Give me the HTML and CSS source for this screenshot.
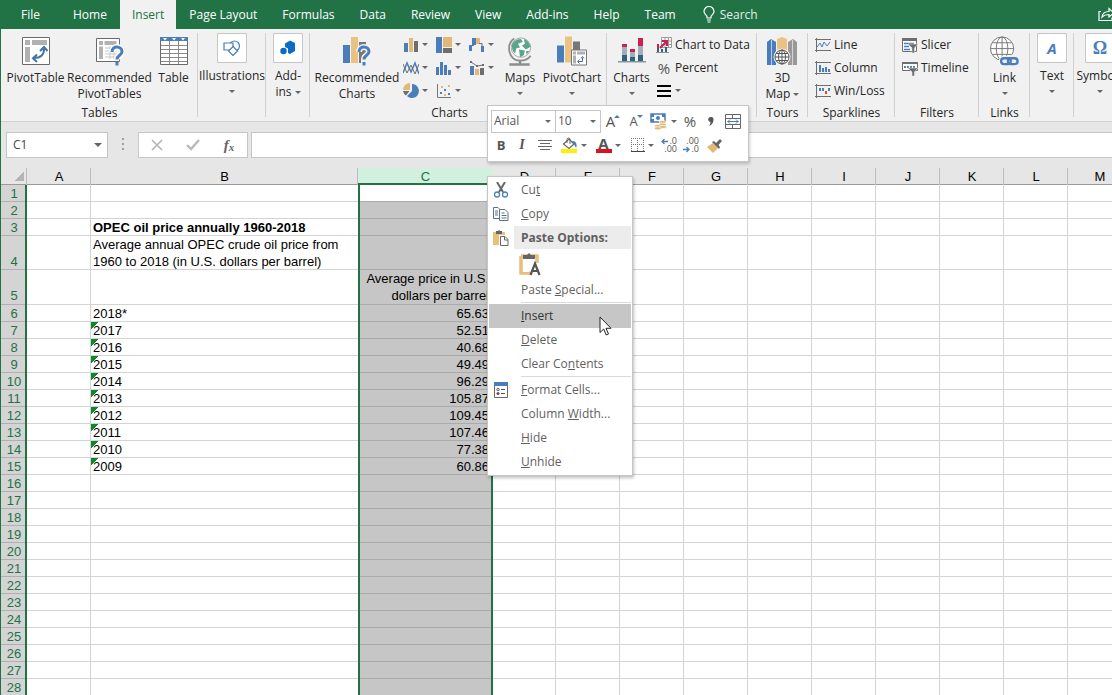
FILE: index.html
```html
<!DOCTYPE html>
<html lang="en">
<head>
  <meta charset="UTF-8"/>
  <meta name="viewport" content="width=device-width, initial-scale=1.0"/>
  <title>OPEC oil price - Excel</title>
  <link rel="stylesheet" href="styles.css">
</head>
<body>
  <nav class="tabs">
    <button class="tab tab-file">File</button>
    <button class="tab">Home</button>
    <button class="tab active">Insert</button>
    <button class="tab">Page Layout</button>
    <button class="tab">Formulas</button>
    <button class="tab">Data</button>
    <button class="tab">Review</button>
    <button class="tab">View</button>
    <button class="tab">Add-ins</button>
    <button class="tab">Help</button>
    <button class="tab">Team</button>
    <button class="tab tab-search">
      <svg width="12" height="17" viewBox="0 0 12 17" fill="none" stroke="#fff" stroke-width="1.2"><path d="M4 12V10.500C3.500 9 1 8 1 5.500A5 5 0 0 1 11 5.500C11 8 8.500 9 8 10.500V12zM4 14h4M4.500 16h3"/></svg>
      Search
    </button>
    <button class="share" aria-label="Share">
      <svg width="18" height="14" viewBox="0 0 18 14" fill="none" stroke="#fff" stroke-width="1.2"><path d="M3 4.500H1v9h13v-3M4 10c.5-4 3-5.500 7-5.500V1.500l5 4.500-5 4V7.500c-3 0-5 .5-7 2.500z"/></svg>
    </button>
  </nav>

  <section class="ribbon">
    <div class="group g-tables">
      <div class="group-body">
        <button class="big b-pivot">
          <svg class="icon" width="28" height="28" viewBox="0 0 28 28"><path fill="#fff" stroke="#6a6a6a" d="M.5.5h27v27H.5z"/><path fill="#b1b1b1" d="M3 3h5v5H3zM10 3h15v5H10zM3 10h5v15H3z"/><path d="M12 21c7 0 10-3 10-9M15 17.500l-4 3.800 4 3.700M18 14l4-4 3.500 4" fill="none" stroke="#4472a8" stroke-width="2"/></svg>
          <span>PivotTable</span>
        </button>
        <button class="big b-recpivot">
          <svg class="icon" width="28" height="30" viewBox="0 0 28 30"><path fill="#fff" stroke="#6a6a6a" d="M.5 2.500h23v23H.5z"/><path fill="#b1b1b1" d="M3 5h4v4H3zM8.500 5h12v4h-12zM3 10.500h4V23H3z"/><path d="M9 12h12M9 15h12M9 18h12M9 21h12M14 10v13M18 10v13" stroke="#c6c6c6"/><path d="M16 16c0-7 10-6 10-.5 0 4-5 3.500-5 8" fill="none" stroke="#fff" stroke-width="6"/><path d="M16 16c0-7 10-6 10-.5 0 4-5 3.500-5 8" fill="none" stroke="#4a7ebb" stroke-width="3"/><path d="M19.500 26h3v3.500h-3z" fill="#4a7ebb"/></svg>
          <span>Recommended<br>PivotTables</span>
        </button>
        <button class="big b-table">
          <svg class="icon" width="28" height="28" viewBox="0 0 28 28"><path fill="#fff" stroke="#6a6a6a" d="M.5.5h27v27H.5z"/><path fill="#4a7ebb" d="M0 0h28v4H0z"/><path d="M3 1h4L5 3.500zM12 1h4l-2 2.500zM21 1h4l-2 2.500z" fill="#fff"/><path d="M1 8.500h26M1 12.500h26M1 16.500h26M1 20.500h26M1 24.500h26M9.500 4v23M18.500 4v23" stroke="#8a8a8a"/></svg>
          <span>Table</span>
        </button>
      </div>
      <div class="group-label">Tables</div>
    </div>

    <div class="group g-illus">
      <div class="group-body">
        <button class="big">
          <span class="box"><svg width="18" height="16" viewBox="0 0 18 16" fill="#fff" stroke="#4a7ebb" stroke-width="1.200"><circle cx="11.500" cy="6" r="5"/><path d="M1 3h9v7H1z"/><path d="M10 6.500l4.500 4.500-4.500 4.500L5.500 11z"/></svg></span>
          <span>Illustrations</span><i class="arrow"></i>
        </button>
      </div>
    </div>

    <div class="group g-addins">
      <div class="group-body">
        <button class="big">
          <span class="box"><svg width="16" height="16" viewBox="0 0 16 16" fill="#0a6cc4"><path d="M5 3.500L10 .5l5 2.500v8l-5 3-2-1V8.500L5 7z"/><circle cx="3.500" cy="11" r="3.200"/></svg></span>
          <span>Add-<br>ins <i class="arrow"></i></span>
        </button>
      </div>
    </div>

    <div class="group g-charts">
      <div class="group-body">
        <button class="big b-reccharts">
          <svg class="icon" width="28" height="30" viewBox="0 0 28 30"><path fill="#4a7ebb" d="M0 9h7v18H0z"/><path fill="#eac282" d="M8 1h7v26H8z"/><path fill="#777" d="M16 6h7v21h-7z"/><path d="M16 16c0-7 10-6 10-.5 0 4-5 3.500-5 8v6" fill="none" stroke="#f1f1f1" stroke-width="6"/><path d="M16 16c0-7 10-6 10-.5 0 4-5 3.500-5 8" fill="none" stroke="#4a7ebb" stroke-width="3"/><path d="M19.500 26h3v3.500h-3z" fill="#4a7ebb"/></svg>
          <span>Recommended<br>Charts</span>
        </button>
        <div class="minis">
          <button aria-label="Column chart"><svg width="16" height="16" viewBox="0 0 16 16"><path fill="#4a7ebb" d="M1 6h4v9H1z"/><path fill="#e3b876" d="M6 1h4v14H6z"/><path fill="#6e6e6e" d="M11 4h4v11h-4z"/></svg><i class="arrow"></i></button>
          <button aria-label="Hierarchy chart"><svg width="16" height="16" viewBox="0 0 16 16"><path fill="#4a7ebb" d="M0 0h6v16H0z"/><path fill="#e3b876" d="M7 0h9v10H7z"/><path fill="#6e6e6e" d="M7 11h9v5H7z"/></svg><i class="arrow"></i></button>
          <button aria-label="Waterfall chart"><svg width="16" height="16" viewBox="0 0 16 16"><path fill="#4a7ebb" d="M0 8h3v6H0zM3 1h4v7H3zM12 9h3v6h-3z"/><path fill="#e3b876" d="M7 1h4v6H7z"/><path d="M3 8.500h2M10 6.500h3v3" stroke="#6e6e6e" fill="none"/></svg><i class="arrow"></i></button>
          <button aria-label="Line chart"><svg width="16" height="16" viewBox="0 0 16 16" fill="none"><path d="M0 13L4 3l4 9 4-9 4 11" stroke="#4a7ebb" stroke-width="1.500"/><path d="M0 4l4 9 4-8 4 9 4-10" stroke="#6e6e6e"/></svg><i class="arrow"></i></button>
          <button aria-label="Statistic chart"><svg width="16" height="16" viewBox="0 0 16 16" fill="#4a7ebb"><path d="M0 7h3v8H0zM4 2h3v13H4zM8 5h3v10H8zM12 10h3v5h-3z"/></svg><i class="arrow"></i></button>
          <button aria-label="Combo chart"><svg width="16" height="16" viewBox="0 0 16 16"><path fill="#4a7ebb" d="M1 6h4v9H1z"/><path fill="#e3b876" d="M6 9h4v6H6z"/><path fill="#6e6e6e" d="M11 8h4v7h-4z"/><path d="M2 2l6 4 6-1" stroke="#6e6e6e" fill="none"/><path d="M1 1h2v2H1zM7 5h2v2H7zM13 4h2v2h-2z" fill="#6e6e6e"/></svg><i class="arrow"></i></button>
          <button aria-label="Pie chart"><svg width="16" height="16" viewBox="0 0 16 16"><path fill="#4a7ebb" d="M9 1a7 7 0 1 1-5 12l5-5z"/><path fill="#e3b876" d="M7 0v7H0a7 7 0 0 1 7-7z"/><path fill="#6e6e6e" d="M0 8h6.500L3 12.500A7 7 0 0 1 0 8z"/></svg><i class="arrow"></i></button>
          <button aria-label="Scatter chart"><svg width="16" height="16" viewBox="0 0 16 16"><path d="M1.500 1v13.500H15" stroke="#777" fill="none"/><path fill="#4a7ebb" d="M4 9h2v2H4zM8 6h2v2H8zM12 10h2v2h-2z"/><path fill="#e3b876" d="M5 3h2v2H5zM12 2h2v2h-2zM8 11h2v2H8z"/></svg><i class="arrow"></i></button>
        </div>
        <button class="big b-maps">
          <svg class="icon" width="26" height="31" viewBox="0 0 26 31"><path d="M7 2.500C-2 9 1 25 13 25.500c5 0 9-2 11-5" fill="none" stroke="#8c8c8c" stroke-width="1.800"/><circle cx="14" cy="12" r="10" fill="#fff" stroke="#a5a5a5"/><path fill="#5ba58a" d="M5 8c2-3 5-5 9-5l2 3-5 2 2 4-4 1-1 5c-3-2-4-6-3-10zM17 3c4 1 6 5 7 8l-5 3-4-4 3-2zM12 14l6 1-1 5-4 2zM19 16l4-1-3 4z"/><path d="M13 25v4M2 29.500h21" stroke="#8c8c8c" stroke-width="2.500"/></svg>
          <span>Maps</span><i class="arrow"></i>
        </button>
        <button class="big b-pchart">
          <svg class="icon" width="30" height="29" viewBox="0 0 30 29"><path fill="#4a7ebb" d="M0 9h7v17H0z"/><path fill="#eac282" d="M8 0h7v26H8z"/><path fill="#777" d="M16 5h7v10h-7z"/><path fill="#fff" stroke="#777" d="M14.500 13.500h15v15h-15z"/><path fill="#b1b1b1" d="M16 15h3v3h-3zM20 15h8v3h-8zM16 19h3v8h-3z"/><path d="M21 25h4.500v-4M22.500 23l-2 2 2 2M24 22l1.500-2 1.500 2" fill="none" stroke="#4472a8"/></svg>
          <span>PivotChart</span><i class="arrow"></i>
        </button>
      </div>
      <div class="group-label">Charts</div>
    </div>

    <div class="group g-addcharts">
      <div class="group-body">
        <button class="big b-charts">
          <svg class="icon" width="28" height="26" viewBox="0 0 28 26"><path fill="#a3aebb" d="M4 8h5v10H4zM12 14h5v5h-5zM20 7h5v11h-5z"/><path fill="#c8234f" d="M4 6h5v3H4zM12 11h5v3h-5zM20 0h5v8h-5z"/><path fill="#2d6478" d="M4 17h5v6H4zM12 19h5v4h-5zM20 17h5v6h-5z"/><path fill="#8795a1" d="M0 23h28v1.500H0z"/></svg>
          <span>Charts</span><i class="arrow"></i>
        </button>
        <div class="list">
          <button><svg width="16" height="16" viewBox="0 0 16 16"><path fill="#fff" stroke="#999" d="M5.500.5h10v10h-10zM5.500 4h10M5.500 7.500h10M9 .5v10M12.500.5v10"/><path fill="#2d6478" d="M1 11h2v4H1zM5 12h2v3H5zM9 10h2v5H9z"/><path fill="#c8234f" d="M1 7h2v4H1z"/><path d="M4 11l6-6M6 4h5v5" stroke="#c8234f" stroke-width="2" fill="none"/><path d="M0 15.500h13" stroke="#8795a1"/></svg>Chart to Data</button>
          <button><b class="pct">%</b>Percent</button>
          <button aria-label="Lines"><svg width="16" height="16" viewBox="0 0 16 16"><path fill="#000" d="M1 2h14v2H1zM1 7h14v2H1zM1 12h14v2H1z"/></svg><i class="arrow"></i></button>
        </div>
      </div>
    </div>

    <div class="group g-tours">
      <div class="group-body">
        <button class="big">
          <svg class="icon" width="30" height="28" viewBox="0 0 30 28"><path fill="#4a7ebb" d="M0 5l4-3 5 3v23H0z"/><path fill="#eac282" d="M10 2l5-2 5 2v14H10z"/><path fill="#999" d="M21 5l5-3 4 3v23h-9z"/><path d="M4.500 3v25M25.500 3v25" stroke="#f1f1f1" stroke-width=".7"/><circle cx="15" cy="20" r="8" fill="#fff" stroke="#f1f1f1"/><g fill="none" stroke="#555"><circle cx="15" cy="20" r="7"/><ellipse cx="15" cy="20" rx="3.500" ry="7"/><path d="M8 20h14M9 16.500h12M9 23.500h12M15 13v14"/></g></svg>
          <span>3D<br>Map <i class="arrow"></i></span>
        </button>
      </div>
      <div class="group-label">Tours</div>
    </div>

    <div class="group g-spark">
      <div class="group-body">
        <div class="list">
          <button><svg width="16" height="14" viewBox="0 0 16 14" fill="none"><path d="M0 1.500h16M0 12.500h16M1.500 0v14" stroke="#6e6e6e"/><path d="M2 9l3-4 2 4 2-5 3 4 3-4" stroke="#4a7ebb"/></svg>Line</button>
          <button><svg width="16" height="14" viewBox="0 0 16 14"><path d="M0 1.500h16M0 12.500h16M1.500 0v14" stroke="#6e6e6e"/><path fill="#4a7ebb" d="M4 4h2v7H4zM7 7h2v4H7zM10 6h2v5h-2zM13 8h2v3h-2z"/></svg>Column</button>
          <button><svg width="16" height="14" viewBox="0 0 16 14"><path d="M0 1.500h16M0 12.500h16M1.500 0v14" stroke="#6e6e6e"/><path fill="#4a7ebb" d="M4 4h2v3H4zM7 4h2v3H7zM13 4h2v3h-2z"/><path fill="#d0532c" d="M10 7h2v3h-2z"/></svg>Win/Loss</button>
        </div>
      </div>
      <div class="group-label">Sparklines</div>
    </div>

    <div class="group g-filters">
      <div class="group-body">
        <div class="list">
          <button><svg width="16" height="16" viewBox="0 0 16 16"><path fill="#fff" stroke="#6e6e6e" d="M.5 1.500h14v13H.5z"/><path fill="#6e6e6e" d="M0 1h15v3H0z"/><path d="M2 6.500h10M2 9.500h5M2 12.500h6" stroke="#4a7ebb" stroke-width="1.500"/><path d="M6 7h10l-3.500 4v5H10v-5z" fill="#6e6e6e" stroke="#f1f1f1" stroke-width=".5"/></svg>Slicer</button>
          <button><svg width="16" height="16" viewBox="0 0 16 16"><path fill="#fff" stroke="#6e6e6e" d="M.5 2.500h15v8H.5z"/><path fill="#6e6e6e" d="M0 2h16v2H0z"/><path d="M2 7h11" stroke="#4a7ebb" stroke-width="2" stroke-dasharray="2 1"/><path d="M6 8h10l-3.500 4v4H10v-4z" fill="#6e6e6e" stroke="#f1f1f1" stroke-width=".5"/></svg>Timeline</button>
        </div>
      </div>
      <div class="group-label">Filters</div>
    </div>

    <div class="group g-links">
      <div class="group-body">
        <button class="big">
          <svg class="icon" width="31" height="31" viewBox="0 0 31 31" fill="none"><g stroke="#777"><circle cx="13" cy="13" r="12" fill="#fff"/><ellipse cx="13" cy="13" rx="6" ry="12"/><path d="M1 13h24M3 7h20M3 19h20M13 1v24"/></g><g stroke="#f1f1f1" stroke-width="5"><rect x="12" y="23" width="10" height="6" rx="3"/><rect x="20" y="22" width="10" height="6" rx="3"/></g><g stroke="#4a7ebb" stroke-width="2.400"><rect x="12" y="23" width="10" height="6" rx="3"/><rect x="19" y="23" width="10" height="6" rx="3"/></g></svg>
          <span>Link</span><i class="arrow"></i>
        </button>
      </div>
      <div class="group-label">Links</div>
    </div>

    <div class="group g-text">
      <div class="group-body">
        <button class="big"><span class="box letter"><em>A</em></span><span>Text</span><i class="arrow"></i></button>
      </div>
    </div>

    <div class="group g-symbols">
      <div class="group-body">
        <button class="big"><span class="box letter omega">Ω</span><span>Symbols</span><i class="arrow"></i></button>
      </div>
    </div>
  </section>

  <section class="formula-bar">
    <div class="name-box">
      <input type="text" value="C1" aria-label="Name box"/>
      <i class="arrow"></i>
    </div>
    <span class="dots"></span>
    <div class="fx-box">
      <button aria-label="Cancel"><svg width="12" height="12" viewBox="0 0 12 12"><path d="M1 1l10 10M11 1L1 11" stroke="#b5b5b5" stroke-width="1.600"/></svg></button>
      <button aria-label="Enter"><svg width="14" height="12" viewBox="0 0 14 12"><path d="M1 6l4 4 8-9" stroke="#b9b9b9" stroke-width="2.400" fill="none"/></svg></button>
      <button class="fx" aria-label="Insert function">f<small>x</small></button>
    </div>
    <input class="formula" type="text" aria-label="Formula bar"/>
  </section>

  <main class="sheet">
    <table>
      <thead><tr id="cols"></tr></thead>
      <tbody id="rows"></tbody>
    </table>
  </main>

  <div class="mini-toolbar">
    <div class="bar-row">
      <label class="pick pick-font"><select aria-label="Font"><option>Arial</option></select><i class="arrow"></i></label>
      <label class="pick pick-size"><select aria-label="Font size"><option>10</option></select><i class="arrow"></i></label>
      <button class="t26" aria-label="Increase font size"><span class="grow">A</span><svg class="tip" width="6" height="3" viewBox="0 0 6 3"><path d="M0 3l3-3 3 3z" fill="#4a7ebb"/></svg></button>
      <button class="t20" aria-label="Decrease font size"><span class="shrink">A</span><svg class="tip" width="6" height="3" viewBox="0 0 6 3"><path d="M0 0l3 3 3-3z" fill="#4a7ebb"/></svg></button>
      <button class="t34" aria-label="Accounting format"><svg width="18" height="17" viewBox="0 0 18 17"><path fill="#fff" stroke="#4a7ebb" stroke-width="1.500" d="M1 1h14v8H1z"/><path fill="#4a7ebb" d="M1 1h3v3H1zM12 1h3v3h-3zM1 6h3v3H1z"/><circle cx="8" cy="5" r="2" fill="#4a7ebb"/><g fill="#e3b876" stroke="#fff" stroke-width=".6"><ellipse cx="12.500" cy="9" rx="3.500" ry="1.500"/><ellipse cx="12.500" cy="11.500" rx="3.500" ry="1.500"/><ellipse cx="8" cy="13" rx="3.500" ry="1.500"/><ellipse cx="8" cy="15.300" rx="3.500" ry="1.500"/><ellipse cx="13" cy="14" rx="3.500" ry="1.500"/></g></svg><i class="arrow"></i></button>
      <button class="t20 percent" aria-label="Percent style">%</button>
      <button class="t22" aria-label="Comma style"><svg width="6" height="9" viewBox="0 0 6 9" fill="#555"><path d="M3 0a2.400 2.400 0 0 1 2.500 2.500C5.500 5.500 4 8 1 9c1-1.500 1.500-2.500 1.500-4A2.400 2.400 0 0 1 3 0z"/></svg></button>
      <button class="t22" aria-label="Merge and center"><svg width="16" height="15" viewBox="0 0 16 15" fill="none"><path stroke="#666" d="M.5.5h15v14H.5zM.5 4.500h15M.5 10.500h15M7.500.5v4M7.500 10.500v4"/><path stroke="#4a7ebb" d="M2.500 7.500h11M5 5.500l-2 2 2 2M11 5.500l2 2-2 2"/></svg></button>
    </div>
    <div class="bar-row">
      <button class="t20"><b>B</b></button>
      <button class="t22 italic"><b>I</b></button>
      <button class="t24" aria-label="Center"><svg width="14" height="11" viewBox="0 0 14 11"><path d="M0 .5h14M2 3.500h10M0 6.500h14M2 9.500h10" stroke="#666"/></svg></button>
      <button class="t34" aria-label="Fill color"><svg width="17" height="16" viewBox="0 0 17 16"><path d="M8 2l5 5-5 4.500L2.500 7z" fill="#fff" stroke="#666" stroke-width="1.200"/><path d="M6 6V2.500a1.500 1.500 0 0 1 3 0V7" fill="none" stroke="#666"/><path d="M11 4c4-.5 5 3 4.500 6.500C14 10 13.500 8 13 7z" fill="#4a7ebb"/><path fill="#ffef00" d="M0 12h16v4H0z"/></svg><i class="arrow"></i></button>
      <button class="t34" aria-label="Font color"><span class="font-color">A</span><i class="arrow"></i></button>
      <button class="t34" aria-label="Borders"><svg width="14" height="14" viewBox="0 0 14 14"><path d="M.5 0v13M6.500 0v13M12.500 0v13M0 .5h13M0 6.500h13" stroke="#777" stroke-dasharray="1 1"/><path d="M0 13.500h14" stroke="#444"/></svg><i class="arrow"></i></button>
      <button class="t22 dec" aria-label="Increase decimal"><span><svg width="7" height="7" viewBox="0 0 7 7"><path d="M7 3.500H1M3.500 1L1 3.500 3.500 6" stroke="#4a7ebb" stroke-width="1.300" fill="none"/></svg>.0</span><span>.00</span></button>
      <button class="t22 dec" aria-label="Decrease decimal"><span>.00</span><span><svg width="7" height="7" viewBox="0 0 7 7"><path d="M0 3.500h6M3.500 1L6 3.500 3.500 6" stroke="#4a7ebb" stroke-width="1.300" fill="none"/></svg>.0</span></button>
      <button class="t24" aria-label="Format painter"><svg width="16" height="15" viewBox="0 0 16 15"><path fill="#e3b876" d="M0 9l6-4 5 5-5 5z"/><path fill="#666" d="M5 4l2-1 2 2 4-4 2 2-3.500 4L13 9l-1 2z"/></svg></button>
    </div>
  </div>

  <div class="menu">
    <button><span class="slot"><svg width="14" height="16" viewBox="0 0 14 16" fill="none"><path d="M3 0l6 10M11 0L5 10" stroke="#666" stroke-width="2"/><circle cx="3" cy="12.500" r="2.500" stroke="#4a7ebb" stroke-width="1.300"/><circle cx="11" cy="12.500" r="2.500" stroke="#4a7ebb" stroke-width="1.300"/></svg></span><span>Cu<u>t</u></span></button>
    <button><span class="slot"><svg width="16" height="14" viewBox="0 0 16 14" fill="#fff" stroke="#5b6f8e"><path d="M.5.5H5l3 3v8H.5z"/><path d="M2 4h3M2 6h3M2 8h3"/><path d="M6.500 2.500H12l3 3v8H6.500z"/><path d="M8.500 6h3M8.500 8.500h5M8.500 11h5"/></svg></span><span><u>C</u>opy</span></button>
    <div class="menu-head"><span class="slot"><svg width="16" height="16" viewBox="0 0 16 16"><path fill="#e9bf7a" d="M0 2h12v13H0z"/><path fill="#666" d="M3 1h2l1-1 1 1h2v3H3z"/><path fill="#fff" stroke="#fff" stroke-width="3" d="M7.500 6.500H12l3 3v6H7.500z"/><path fill="#fff" stroke="#666" d="M7.500 6.500H12l3 3v6H7.500z"/><path fill="none" stroke="#666" d="M11.500 6.500v3.500H15"/></svg></span><strong>Paste Options:</strong></div>
    <button class="paste" aria-label="Keep text only"><svg width="22" height="24" viewBox="0 0 22 24"><path d="M2 4h16v7M2 4v17h9" fill="none" stroke="#e9bf7a" stroke-width="3.500"/><path fill="#fff" d="M4 6h12v6l-6 8H4z"/><path fill="#666" d="M4 3h4l2-2 2 2h4v4H4z"/><path d="M11.500 23l4.500-11.500L20.500 23M13 19h6" fill="none" stroke="#555" stroke-width="2.200"/></svg></button>
    <button><span class="slot"></span><span>Paste <u>S</u>pecial...</span></button>
    <hr>
    <button class="hover"><span class="slot"></span><span><u>I</u>nsert</span></button>
    <button><span class="slot"></span><span><u>D</u>elete</span></button>
    <button><span class="slot"></span><span>Clear Co<u>n</u>tents</span></button>
    <hr>
    <button><span class="slot"><svg width="14" height="16" viewBox="0 0 14 16" fill="#fff"><path d="M.5.5h13v15H.5z" stroke="#666"/><path d="M0 0h14v4H0z" fill="#4a7ebb"/><circle cx="4" cy="7.500" r="1.200" stroke="#555"/><path d="M7 7.500h4M7 11.500h4" stroke="#555"/><circle cx="4" cy="11.500" r="1.500" fill="#555"/></svg></span><span><u>F</u>ormat Cells...</span></button>
    <button><span class="slot"></span><span>Column <u>W</u>idth...</span></button>
    <button><span class="slot"></span><span><u>H</u>ide</span></button>
    <button><span class="slot"></span><span><u>U</u>nhide</span></button>
    <svg class="cursor" width="13" height="20" viewBox="0 0 13 20"><path d="M1 1v15.500l3.700-3.500 2.500 6 2.300-1-2.500-5.700H12z" fill="#fff" stroke="#222"/></svg>
  </div>

  <script>
    const letters = "ABCDEFGHIJKLM".split("");
    const cells = {
      B3: "OPEC oil price annually 1960-2018",
      B4: "Average annual OPEC crude oil price from 1960 to 2018 (in U.S. dollars per barrel)",
      C5: "Average price in U.S. dollars per barrel",
      B6: "2018*", C6: "65.63"
    };
    const prices = ["52.51", "40.68", "49.49", "96.29", "105.87", "109.45", "107.46", "77.38", "60.86"];
    prices.forEach((price, i) => {
      cells["B" + (7 + i)] = String(2017 - i);
      cells["C" + (7 + i)] = price;
    });

    let head = '<th class="corner"></th>';
    letters.forEach(l => { head += `<th class="col-${l}">${l}</th>`; });
    document.getElementById("cols").innerHTML = head;

    let body = "";
    for (let r = 1; r <= 28; r++) {
      body += `<tr class="row-${r}"><th>${r}</th>`;
      letters.forEach(l => {
        const flag = l === "B" && r > 6 && r < 16 ? " flag" : "";
        body += `<td class="col-${l}${flag}">${cells[l + r] || ""}</td>`;
      });
      body += "</tr>";
    }
    document.getElementById("rows").innerHTML = body;
  </script>
</body>
</html>
```

FILE: styles.css
```css
:root {
  --green: #217346;
  --ribbon: #f1f1f1;
  --line: #d4d4d4;
  --text: #262626;
  --gray: #5f5f5f;
}
* { margin:0; padding:0; box-sizing:border-box; }
html, body { height:100%; }
body {
  display:flex; flex-direction:column; overflow:hidden; position:relative;
  font-family:'Open Sans','Noto Sans',sans-serif; font-size:12px; line-height:16px;
  color:var(--text); background:#fff; border-left:1px solid var(--green);
}
button, input, select { font:inherit; color:inherit; background:none; border:none; border-radius:0; outline:none; }
button { white-space:nowrap; }
svg { display:block; flex:none; }

.arrow {
  display:inline-block; width:0; height:0; vertical-align:middle; flex:none;
  border-left:3px solid transparent; border-right:3px solid transparent; border-top:3px solid #666;
}

/* tabs */
.tabs { display:flex; gap:1px; height:29px; flex:none; background:var(--green); color:#fff; overflow:hidden; }
.tab { padding:0 12px; flex:none; }
.tab-file { padding:0 20px; }
.tab.active { background:var(--ribbon); color:var(--green); }
.tab-search { display:flex; align-items:center; gap:5px; padding:0 14px; color:#e3efe8; }
.share { position:absolute; right:-4px; top:7px; }

/* ribbon */
.ribbon {
  display:flex; flex:none; height:93px; padding-top:4px; overflow:hidden;
  background:var(--ribbon); border-bottom:1px solid #d2d2d2;
}
.group {
  display:flex; flex-direction:column; flex:none;
  background:linear-gradient(#d0d0d0,#d0d0d0) right top / 1px 84px no-repeat;
}
.group-body { display:flex; height:73px; justify-content:center; }
.group-label { text-align:center; }
.big { display:flex; flex-direction:column; align-items:center; }
.big .icon { height:37px; padding:3px 0 4px; }
.big > .arrow { margin-top:6px; }
.box {
  width:30px; height:30px; margin-bottom:5px; background:#fff; border:1px solid #c6c6c6;
  display:flex; align-items:center; justify-content:center; flex:none;
}
.letter { color:#4a7ebb; font-weight:bold; font-size:15px; }
.omega { font-family:'Liberation Serif',serif; font-size:18px; }

.g-tables { width:197px; }
.g-illus { width:68px; }
.g-addins { width:44px; }
.g-charts { width:297px; }
.g-charts .group-label { padding-right:18px; }
.g-addcharts { width:150px; }
.g-tours { width:51px; }
.g-spark { width:87px; }
.g-filters { width:84px; }
.g-links { width:51px; }
.g-text { width:44px; }
.g-symbols { width:52px; }
.g-addcharts .group-body, .g-spark .group-body, .g-filters .group-body { justify-content:flex-start; }
.g-spark .list, .g-filters .list { padding-left:7px; }

.b-pivot { width:66px; }
.b-recpivot { width:82px; }
.b-table { width:46px; }
.b-reccharts { width:88px; }
.b-maps { width:40px; }
.b-pchart { width:64px; }
.b-charts { width:49px; }

.minis { display:grid; grid-template-columns:repeat(3,33px); grid-auto-rows:23px; }
.minis button { display:flex; align-items:center; gap:3px; padding-left:2px; }
.list { display:flex; flex-direction:column; }
.list button { display:flex; align-items:center; gap:3px; height:23px; }
.list .pct { width:16px; font-weight:normal; font-size:15px; color:#555; }

/* formula bar */
.formula-bar { display:flex; flex:none; height:46px; padding:10px 0 10px 5px; background:#e6e6e6; }
.name-box { display:flex; align-items:center; width:102px; padding:0 5px 0 6px; background:#fff; border:1px solid #c6c6c6; }
.name-box input { flex:1; width:0; color:#444; }
.name-box .arrow { border-width:4px 4px 0; }
.dots { width:2px; height:12px; margin:6px 14px 0; background:repeating-linear-gradient(#a0a0a0 0 2px,transparent 2px 5px); }
.fx-box { display:flex; width:110px; background:#fff; border:1px solid #c6c6c6; }
.fx-box button { flex:1; display:flex; align-items:center; justify-content:center; }
.fx-box .fx { font:italic bold 15px 'Liberation Serif',serif; color:#666; }
.fx small { font-size:11px; padding-top:3px; }
.formula { flex:1; margin-left:3px; background:#fff; border:1px solid #c6c6c6; border-right:none; }

/* grid */
.sheet { flex:1; overflow:hidden; font-family:'Liberation Sans',Arial,sans-serif; font-size:13px; line-height:17px; }
table { table-layout:fixed; width:1130px; border-spacing:0; color:#000; }
th { font-weight:normal; text-align:center; }
thead th { height:17px; width:64px; background:#e6e6e6; box-shadow:inset -1px 0 #bdbdbd, inset 0 -1px #9b9b9b; }
thead .corner {
  width:26px;
  background:linear-gradient(135deg,transparent 50%,#b4b4b4 50%) 14px 4px / 9px 9px no-repeat #e6e6e6;
}
thead .col-B { width:267px; }
thead .col-C { width:135px; background:#d2f0e0; color:var(--green); box-shadow:inset 0 -2px var(--green); }
thead .col-D { width:63px; }
tbody th { vertical-align:bottom; color:var(--green); background:#d4d4d4; box-shadow:inset -2px 0 var(--green), inset 0 -1px #b0b0b0; }
td { height:17px; padding:0 2px; vertical-align:bottom; box-shadow:inset -1px -1px var(--line); }
td.col-B { box-shadow:inset 0 -1px var(--line); }
td.col-C { padding-right:4px; text-align:right; background:#c6c6c6; box-shadow:inset 2px 0 var(--green), inset -2px 0 var(--green), inset 0 -1px #ababab; }
.row-1 td.col-C { background:#fff; }
.row-3 td.col-B { font-weight:bold; }
.row-4 td { height:34px; }
.row-5 td { height:35px; }
.row-5 th, .row-5 td { padding-bottom:1px; }
td.flag { background:linear-gradient(135deg,#0a8a2a 5px,transparent 5px); }

/* mini toolbar */
.mini-toolbar {
  position:absolute; left:486px; top:105px; width:262px; padding:3px 2px 4px 3px;
  background:#fff; border:1px solid #c6c6c6; box-shadow:1px 2px 3px rgba(0,0,0,0.2); color:#555;
}
.bar-row { display:flex; height:24px; align-items:center; }
.bar-row button { display:flex; align-items:center; justify-content:center; gap:3px; height:23px; flex:none; }
.bar-row .t20 { width:20px; }
.bar-row .t22 { width:22px; }
.bar-row .t24 { width:24px; }
.bar-row .t26 { width:26px; }
.bar-row .t34 { width:34px; }
.pick { display:flex; align-items:center; height:23px; padding:0 4px 0 2px; border:1px solid #c6c6c6; margin-right:-1px; }
.pick select { appearance:none; flex:1; width:0; }
.pick-font { width:65px; }
.pick-size { width:46px; }
.bar-row button .tip { margin:0 0 10px -4px; }
.grow { font-size:15px; }
.shrink { font-size:13px; }
.bar-row .percent { font-size:15px; }
.bar-row b { font-size:13px; }
.italic b { font:italic bold 14px 'Liberation Serif',serif; }
.font-color { width:16px; height:16px; line-height:13px; font-size:15px; font-weight:bold; border-bottom:4px solid #e0101b; }
.bar-row .dec { flex-direction:column; gap:0; align-items:flex-end; padding-right:4px; font-size:9px; line-height:8px; }
.dec span { display:flex; align-items:center; gap:1px; }

/* context menu */
.menu {
  position:absolute; left:486px; top:176px; width:146px; padding:1px;
  background:#fff; border:1px solid #c6c6c6; box-shadow:1px 2px 3px rgba(0,0,0,0.25); color:var(--gray);
}
.menu button { display:flex; align-items:center; width:100%; height:24px; text-align:left; }
.menu .slot { display:flex; justify-content:center; width:24px; margin-right:8px; flex:none; }
.menu-head { display:flex; align-items:center; height:23px; background:linear-gradient(#ececec,#ececec) 25px 0 no-repeat; }
.menu .paste { height:29px; padding-left:30px; }
.menu hr { height:1px; margin:0 0 1px 32px; border:none; background:#dadada; }
.menu .hover { background:#c6c6c6; color:#333; }
.cursor { position:absolute; left:111px; top:139px; }
```
